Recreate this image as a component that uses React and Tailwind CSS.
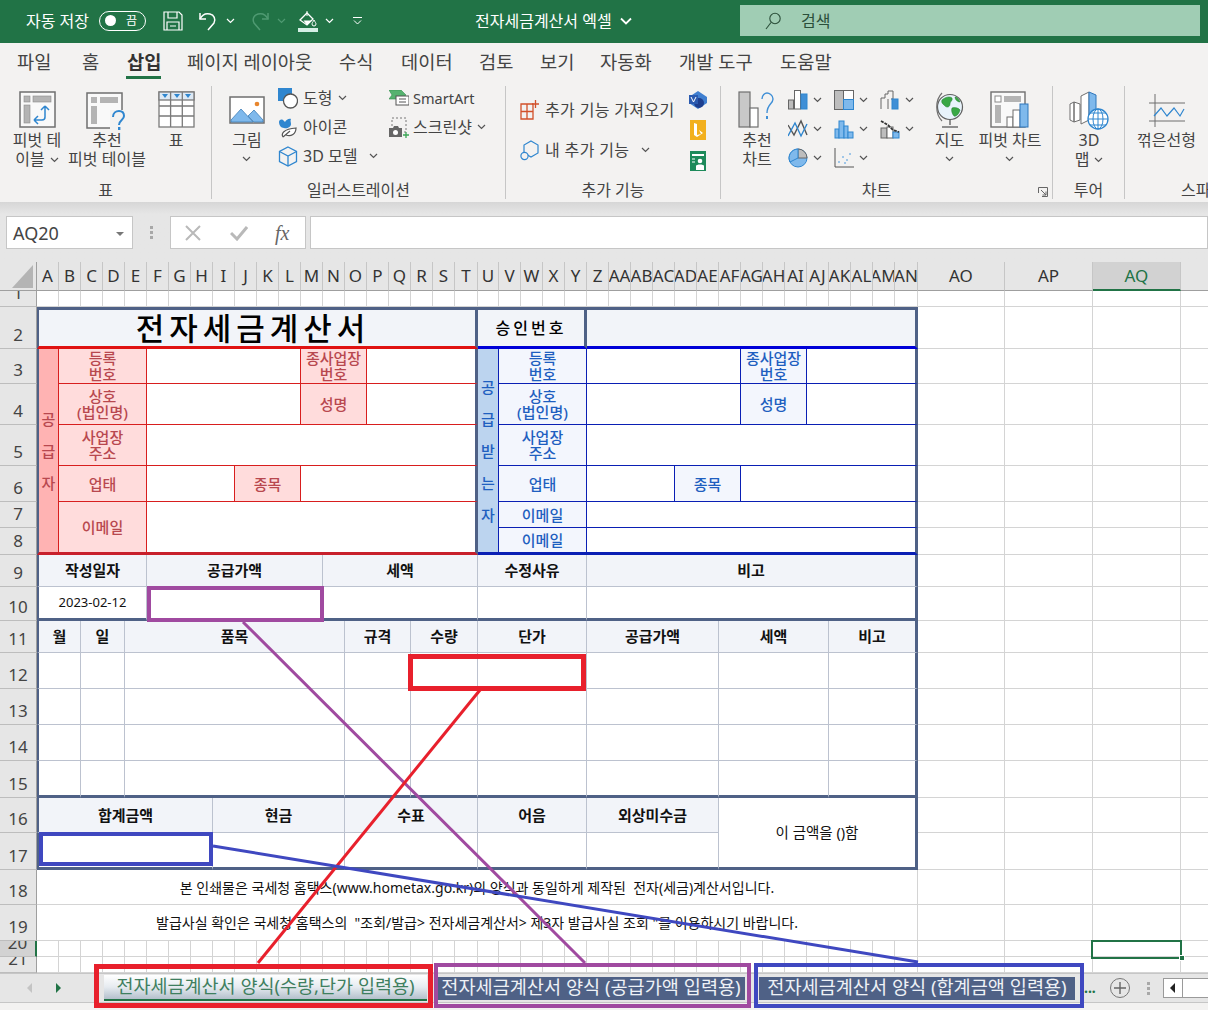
import { Fragment } from "react";

const COLS = "A B C D E F G H I J K L M N O P Q R S T U V W X Y Z AA AB AC AD AE AF AG AH AI AJ AK AL AM AN".split(" ");

const SPAN = {
  1: "col-span-1",
  2: "col-span-2",
  3: "col-span-3",
  4: "col-span-4",
  5: "col-span-5",
  6: "col-span-6",
  7: "col-span-7",
  8: "col-span-8",
  9: "col-span-9",
  10: "col-span-10",
  15: "col-span-15",
  20: "col-span-20",
  40: "col-span-40",
};

function Chevron({ className = "", color = "#555" }) {
  return (
    <svg width="9" height="6" viewBox="0 0 9 6" className={className}>
      <path d="M1 1l3.5 3.5L8 1" fill="none" stroke={color} strokeWidth="1.2" />
    </svg>
  );
}

/* title bar icons */
function SaveIcon() {
  return (
    <svg width="20" height="20" viewBox="0 0 20 20" fill="none" stroke="#fff" strokeWidth="1.2">
      <path d="M1 1h15l3 3v15H1z" />
      <path d="M5 1v6h9V1M4 19v-8h12v8M7 15h6" />
    </svg>
  );
}
function UndoIcon({ color = "#fff", flip = false }) {
  return (
    <svg width="21" height="21" viewBox="0 0 21 21" fill="none" stroke={color} strokeWidth="1.5" className={flip ? "-scale-x-100" : ""}>
      <path d="M2 3v6h6" />
      <path d="M2 9c2-4 6-6 10-5 4 1 6 5 4 9l-6 7" />
    </svg>
  );
}
function FillIcon() {
  return (
    <svg width="20" height="22" viewBox="0 0 20 22" fill="none">
      <path d="M2 10l7-7 6 6-6 6z" stroke="#fff" strokeWidth="1.3" />
      <path d="M5.5 10.5h8l-4.5 4.5z" fill="#fff" />
      <path d="M9 1v5M16 10c1 2 2 3 2 4a2 2 0 0 1-4 0c0-1 1-2 2-4z" stroke="#fff" strokeWidth="1" />
      <rect x="0" y="18" width="20" height="4" fill="#d5efe5" />
    </svg>
  );
}
function SearchGlass() {
  return (
    <svg width="16" height="18" viewBox="0 0 16 18" fill="none" stroke="#2b4f3a" strokeWidth="1.1">
      <circle cx="10" cy="6.5" r="5.2" />
      <path d="M6 10.5L1 17" />
    </svg>
  );
}

/* ribbon: large icons */
function PivotFrame({ children }) {
  return (
    <svg width="37" height="37" viewBox="0 0 37 37">
      <rect x="1" y="1" width="35" height="35" fill="#f9f9f9" stroke="#6f6f6f" strokeWidth="1.5" />
      <rect x="5" y="5" width="6" height="6" fill="#b4b4b4" stroke="#8a8a8a" strokeWidth=".6" />
      <rect x="14" y="5" width="18" height="6" fill="#b4b4b4" stroke="#8a8a8a" strokeWidth=".6" />
      <rect x="5" y="14" width="6" height="18" fill="#b4b4b4" stroke="#8a8a8a" strokeWidth=".6" />
      {children}
    </svg>
  );
}
function PivotTableIcon() {
  return (
    <PivotFrame>
      <path d="M26 15l-4 4M26 15l4 4M26 15v11a3 3 0 0 1-3 3H15M15 29l4-4M15 29l4 4" fill="none" stroke="#2f86cf" strokeWidth="1.5" />
    </PivotFrame>
  );
}
function RecPivotIcon() {
  return (
    <svg width="42" height="40" viewBox="0 0 42 40" className="translate-y-[2px]">
      <rect x="1" y="1" width="35" height="35" fill="#f9f9f9" stroke="#6f6f6f" strokeWidth="1.5" />
      <rect x="5" y="5" width="6" height="6" fill="#b4b4b4" />
      <rect x="14" y="5" width="18" height="6" fill="#b4b4b4" />
      <rect x="5" y="14" width="6" height="18" fill="#b4b4b4" />
      <rect x="24" y="18" width="18" height="22" fill="#f3f2f1" />
      <path d="M27 25c0-4 3-6 6-6s5 2 5 5c0 4-5 4-5 9" fill="none" stroke="#2f86cf" strokeWidth="2" />
      <rect x="32" y="35" width="2.4" height="3" fill="#2f86cf" />
    </svg>
  );
}
function TableIcon() {
  return (
    <svg width="37" height="37" viewBox="0 0 37 37" fill="none" stroke="#7a7a7a" strokeWidth="1.3">
      <rect x="1" y="1" width="35" height="35" fill="#fff" />
      <rect x="1" y="1" width="35" height="8" fill="#dce9f5" />
      <path d="M12.6 1v35M24.3 1v35M1 15h35M1 25h35" />
      <path d="M4 3h6l-3 4zM16 3h6l-3 4zM27 3h6l-3 4z" fill="#2f86cf" stroke="none" />
    </svg>
  );
}
function PictureIcon() {
  return (
    <svg width="36" height="28" viewBox="0 0 36 28">
      <rect x="1" y="1" width="34" height="26" fill="#fff" stroke="#6f6f6f" strokeWidth="1.5" />
      <path d="M2 24l10-11 12 13H2z" fill="#7fb9ec" stroke="#3f7fb8" strokeWidth=".8" />
      <path d="M19 20l6-6 9 10v2h-9z" fill="#7fb9ec" stroke="#3f7fb8" strokeWidth=".8" />
      <circle cx="28" cy="8" r="2.3" fill="#e8862d" />
    </svg>
  );
}
function RecChartIcon() {
  return (
    <svg width="38" height="38" viewBox="0 0 38 38" fill="none">
      <rect x="1" y="1" width="11" height="35" fill="#c8c8c8" stroke="#6f6f6f" strokeWidth="1.2" />
      <rect x="12" y="17" width="8" height="19" fill="#fff" stroke="#6f6f6f" strokeWidth="1.2" />
      <path d="M24 8c0-4 3-6 5-6s6 2 6 6c0 5-6 5-6 14" stroke="#3f8fd6" strokeWidth="1.4" />
      <rect x="28" y="25" width="2" height="3" fill="#3f8fd6" />
    </svg>
  );
}
function GlobeIcon() {
  return (
    <svg width="32" height="38" viewBox="0 0 32 38" fill="none">
      <circle cx="16" cy="16" r="12.5" fill="#e8f3fb" stroke="#5f5f5f" strokeWidth="1.2" />
      <path d="M8 9c3-3 8-4 10-2 1 3-2 3-2 6s-3 4-5 2-4-3-3-6zM18 17c3-1 7 0 8 2-1 4-4 7-6 6-2-2-3-6-2-8zM21 6c2 0 4 2 5 5-2 0-5-2-5-5z" fill="#39a845" stroke="#237a2c" strokeWidth=".5" />
      <path d="M8 2C1 9 1 23 8 30" stroke="#6f6f6f" strokeWidth="1.2" />
      <path d="M16 29v5M8 36h16" stroke="#6f6f6f" strokeWidth="1.5" />
    </svg>
  );
}
function PivotChartIcon() {
  return (
    <svg width="40" height="38" viewBox="0 0 40 38">
      <rect x="1" y="1" width="34" height="35" fill="#f9f9f9" stroke="#6f6f6f" strokeWidth="1.4" />
      <rect x="5" y="5" width="6" height="6" fill="#fff" stroke="#8a8a8a" />
      <rect x="14" y="5" width="17" height="6" fill="#b4b4b4" />
      <rect x="5" y="14" width="6" height="18" fill="#b4b4b4" />
      <rect x="17" y="26" width="6" height="10" fill="#fff" stroke="#6f6f6f" />
      <rect x="23" y="19" width="7" height="17" fill="#fff" stroke="#6f6f6f" />
      <rect x="30" y="13" width="8" height="23" fill="#7fb9ec" stroke="#2f76bb" />
    </svg>
  );
}
function Map3DIcon() {
  return (
    <svg width="40" height="40" viewBox="0 0 40 40" fill="none">
      <path d="M1 14l4-2v20l-4-2zM5 12l6 2v16l-6 2z" fill="#fff" stroke="#6f6f6f" />
      <path d="M12 6l8-4v28l-8 4z" fill="#fff" stroke="#6f6f6f" />
      <path d="M20 2l7 3v20h-7z" fill="#7fb9ec" stroke="#2f76bb" />
      <circle cx="29" cy="29" r="10" fill="#fff" stroke="#2f86cf" strokeWidth="1.3" />
      <path d="M19 29h20M29 19v20M21 23h16M21 35h16" stroke="#2f86cf" />
      <ellipse cx="29" cy="29" rx="5" ry="10" stroke="#2f86cf" />
    </svg>
  );
}
function SparkLineIcon() {
  return (
    <svg width="36" height="36" viewBox="0 0 36 36" fill="none">
      <path d="M0 11h36M0 29h36M6 2v33" stroke="#6f6f6f" strokeWidth="1" />
      <path d="M5 24l7-8 6 8 7-8 6 8 4-7" stroke="#2f86cf" strokeWidth="1.2" />
    </svg>
  );
}

/* ribbon: small icons */
function ShapesIcon() {
  return (
    <svg width="20" height="21" viewBox="0 0 20 21">
      <rect x="0" y="0" width="14" height="13" fill="#2f86cf" />
      <circle cx="12.5" cy="13" r="7" fill="#fff" stroke="#555" strokeWidth="1.3" />
    </svg>
  );
}
function IconsIcon() {
  return (
    <svg width="20" height="21" viewBox="0 0 20 21" fill="none">
      <path d="M1 5c0-2 2-3 4-2l2 2c1-2 4-4 6-3-1 2 0 3 0 5 0 3-4 5-7 4-3 0-5-3-5-6z" fill="#2f86cf" />
      <path d="M5 20c-2-3 0-8 13-9 0 6-5 9-10 7M5 20l7-6" stroke="#555" strokeWidth="1.2" fill="#fff" />
    </svg>
  );
}
function CubeIcon() {
  return (
    <svg width="20" height="21" viewBox="0 0 20 21" fill="none" stroke="#2f86cf" strokeWidth="1.3">
      <path d="M10 1l8.5 4.5v10L10 20l-8.5-4.5v-10z" />
      <path d="M1.5 5.5L10 10l8.5-4.5M10 10v10" />
    </svg>
  );
}
function SmartArtIcon() {
  return (
    <svg width="20" height="16" viewBox="0 0 20 16">
      <path d="M0 0h12l5 5-5 4H0l3-4z" fill="#56b26f" stroke="#2f8f4c" strokeWidth=".6" />
      <rect x="7" y="6" width="13" height="9" fill="#fff" stroke="#555" />
      <path d="M10 9h7M10 12h7" stroke="#555" />
    </svg>
  );
}
function ScreenshotIcon() {
  return (
    <svg width="20" height="21" viewBox="0 0 20 21" fill="none">
      <rect x="3" y="1" width="14" height="14" stroke="#777" strokeDasharray="2 2" />
      <path d="M0 11h4l1-2h4l1 2h3v9H0z" fill="#666" />
      <circle cx="6.5" cy="15.5" r="2.5" fill="#fff" />
      <path d="M17 15v6M14 18h6" stroke="#3aa655" strokeWidth="1.3" />
    </svg>
  );
}
function AddInsIcon() {
  return (
    <svg width="20" height="20" viewBox="0 0 20 20" fill="none" stroke="#d2502a" strokeWidth="1.3">
      <path d="M1 4h12v15H1zM1 11.5h12M7 4v15" />
      <path d="M15.5 0v8M12 4h7" />
    </svg>
  );
}
function MyAddInsIcon() {
  return (
    <svg width="20" height="21" viewBox="0 0 20 21" fill="none" stroke="#2f86cf" strokeWidth="1.2">
      <path d="M11 1l7 4v8l-7 4-7-4V5z" />
      <circle cx="4.5" cy="16" r="3.6" fill="#f3f2f1" />
    </svg>
  );
}
function VisioIcon() {
  return (
    <svg width="18" height="18" viewBox="0 0 18 18">
      <path d="M9 0l9 6v6l-9 6-9-6V6z" fill="#3f7fd0" />
      <circle cx="10" cy="12" r="5" fill="#1d3f8f" />
      <rect x="0" y="4" width="9" height="9" fill="#2b5bb0" />
      <path d="M2 6l2.5 5L7 6" fill="none" stroke="#fff" />
    </svg>
  );
}
function BingIcon() {
  return (
    <svg width="16" height="20" viewBox="0 0 16 20">
      <rect width="16" height="20" fill="#f2b01e" />
      <path d="M4 3v12l3 2 6-4-4-3 2 4-4 1V4z" fill="#fff" />
    </svg>
  );
}
function PeopleIcon() {
  return (
    <svg width="16" height="20" viewBox="0 0 16 20">
      <rect width="16" height="20" fill="#1d8a5a" />
      <rect x="2" y="3" width="12" height="2" fill="#fff" />
      <circle cx="10" cy="10" r="2.3" fill="#fff" />
      <path d="M6 19v-4c0-2 8-2 8 0v4z" fill="#fff" />
      <path d="M2 8h3M2 11h3" stroke="#fff" />
    </svg>
  );
}

/* chart gallery */
const b = "#2f86cf";
function BarMini() {
  return (
    <svg width="20" height="20" viewBox="0 0 20 20" fill="#fff" stroke="#666">
      <rect x=".5" y="10" width="5" height="9" fill="#bdbdbd" />
      <rect x="6.5" y=".5" width="6" height="18.5" />
      <rect x="13" y="4" width="6" height="15" fill="#3f8fd6" stroke={b} />
    </svg>
  );
}
function TreeMini() {
  return (
    <svg width="20" height="20" viewBox="0 0 20 20" stroke="#666">
      <rect x=".5" y=".5" width="9" height="19" fill="#bdbdbd" />
      <rect x="9.5" y=".5" width="10" height="9" fill="#fff" />
      <rect x="9.5" y="9.5" width="10" height="10" fill="#7fb9ec" stroke={b} />
    </svg>
  );
}
function WaterMini() {
  return (
    <svg width="20" height="20" viewBox="0 0 20 20" stroke="#666" fill="none">
      <path d="M1 19V8h4V4h3V1h5v8h-2" />
      <path d="M8 9v10" />
      <rect x="12" y="9" width="6" height="10" fill="#3f8fd6" stroke={b} />
    </svg>
  );
}
function LineMini() {
  return (
    <svg width="20" height="20" viewBox="0 0 20 20" fill="none">
      <path d="M0 6l6 10 7-14 6 14" stroke="#555" strokeWidth="1.4" />
      <path d="M0 17l7-13 6 13 6-12" stroke={b} strokeWidth="1.4" />
    </svg>
  );
}
function HistMini() {
  return (
    <svg width="20" height="20" viewBox="0 0 20 20" fill="#7fb9ec" stroke={b}>
      <rect x="1" y="10" width="4" height="9" />
      <rect x="5" y="2" width="5" height="17" />
      <rect x="10" y="7" width="4" height="12" />
      <rect x="14" y="13" width="5" height="6" />
    </svg>
  );
}
function ComboMini() {
  return (
    <svg width="20" height="20" viewBox="0 0 20 20" stroke="#666" fill="#fff">
      <rect x="1" y="9" width="6" height="10" fill="#bdbdbd" />
      <rect x="7" y="8" width="6" height="11" />
      <rect x="13" y="13" width="6" height="6" fill="#7fb9ec" stroke={b} />
      <path d="M1 2l7 4 5 5 6 2" fill="none" stroke="#333" strokeWidth="1.8" strokeDasharray="3 1" />
    </svg>
  );
}
function PieMini() {
  return (
    <svg width="20" height="20" viewBox="0 0 20 20" stroke="#444">
      <circle cx="10" cy="10" r="9" fill="#7fb9ec" stroke={b} />
      <path d="M10 10V1a9 9 0 0 1 9 9z" fill="#bdbdbd" stroke="#666" />
      <path d="M10 10L2 14a9 9 0 0 1 8-13z" fill="#7fb9ec" stroke={b} />
    </svg>
  );
}
function ScatterMini() {
  return (
    <svg width="20" height="20" viewBox="0 0 20 20">
      <path d="M1 0v19h19" fill="none" stroke="#555" />
      <g fill="#9fc6e8">
        <rect x="4" y="13" width="2" height="2" />
        <rect x="8" y="8" width="2" height="2" />
        <rect x="12" y="11" width="2" height="2" />
        <rect x="15" y="5" width="2" height="2" />
        <rect x="10" y="14" width="2" height="2" />
      </g>
    </svg>
  );
}

function Group({ width, label, children, labelClass = "", last = false, launcher = false }) {
  return (
    <div className={"relative mt-[2px] flex h-[113px] shrink-0 flex-col " + width + (last ? "" : " border-r border-[#c6c6c6]")}>
      <div className="flex h-[94px] shrink-0 items-start">{children}</div>
      <div className={"flex h-[20px] shrink-0 items-center justify-center whitespace-nowrap text-[16px] text-[#444] " + labelClass}>{label}</div>
      {launcher && (
        <svg width="10" height="10" viewBox="0 0 10 10" fill="none" stroke="#666" className="absolute bottom-[2px] right-[4px]">
          <path d="M.5 6V.5H9.5V9.5H4M3 3l5 5M8 4.5V8H4.5" />
        </svg>
      )}
    </div>
  );
}

function LargeButton({ width, icon, lines, chevron = false }) {
  return (
    <div className={"flex shrink-0 flex-col items-center pt-[5px] text-[16px] leading-[19px] text-[#444] " + width}>
      <div className="flex h-[37px] items-center justify-center">{icon}</div>
      <div className="mt-[3px] flex flex-col items-center whitespace-nowrap">
        {lines.map((t, i) => (
          <span key={i} className="inline-flex items-center">{t}</span>
        ))}
        {chevron && <Chevron className="mt-[6px]" />}
      </div>
    </div>
  );
}

function SmallRow({ icon, label, chevron, gap = "ml-[5px]" }) {
  return (
    <div className="flex h-[24px] items-center whitespace-nowrap text-[16px] text-[#444]">
      <span className="flex w-[20px] justify-center">{icon}</span>
      <span className={gap}>{label}</span>
      {chevron && <Chevron className={chevron} />}
    </div>
  );
}

function MiniChart({ icon }) {
  return (
    <div className="flex h-[29px] w-[46px] items-center gap-[5px]">
      {icon}
      <Chevron />
    </div>
  );
}

function TitleBar() {
  return (
    <div className="flex h-[43px] items-center bg-[#217346] pb-[2px] text-[16px] text-white">
      <span className="ml-[26px] w-[73px] whitespace-nowrap">자동 저장</span>
      <div className="flex h-[20px] w-[47px] items-center justify-between rounded-full border border-white pl-[5px] pr-[8px] text-[12px]">
        <span className="h-[11px] w-[11px] rounded-full bg-white" />
        <span>끔</span>
      </div>
      <span className="ml-[17px]"><SaveIcon /></span>
      <span className="ml-[15px]"><UndoIcon /></span>
      <Chevron className="ml-[7px]" color="#fff" />
      <span className="ml-[14px]"><UndoIcon color="#4f9a72" flip /></span>
      <Chevron className="ml-[7px]" color="#4f9a72" />
      <span className="ml-[12px]"><FillIcon /></span>
      <Chevron className="ml-[7px]" color="#fff" />
      <svg width="9" height="9" viewBox="0 0 9 9" fill="none" stroke="#fff" className="ml-[19px]">
        <path d="M0 1.5h9M1 4.5l3.5 3.5L8 4.5" />
      </svg>
      <span className="ml-[113px] w-[146px] whitespace-nowrap">전자세금계산서 엑셀</span>
      <svg width="12" height="8" viewBox="0 0 12 8" fill="none" stroke="#fff" strokeWidth="1.8" className="-translate-x-[1px]">
        <path d="M1 1.5l5 5 5-5" />
      </svg>
      <div className="ml-[107px] flex h-[31px] w-[460px] items-center bg-[#a0cdb4] pl-[25px] text-[#2b4f3a]">
        <SearchGlass />
        <span className="ml-[20px]">검색</span>
      </div>
    </div>
  );
}

const TABS = [
  ["파일", "w-[65px]"],
  ["홈", "w-[45px]"],
  ["삽입", "w-[60px]"],
  ["페이지 레이아웃", "w-[152px]"],
  ["수식", "w-[62px]"],
  ["데이터", "w-[78px]"],
  ["검토", "w-[61px]"],
  ["보기", "w-[60px]"],
  ["자동화", "w-[79px]"],
  ["개발 도구", "w-[101px]"],
  ["도움말", "w-[60px]"],
];

function TabRow() {
  return (
    <div className="flex h-[41px] items-center pb-[2px] pl-[17px] text-[18.7px] text-[#444]">
      {TABS.map(([t, w]) => (
        <div key={t} className={"relative whitespace-nowrap " + w}>
          <span className={t === "삽입" ? "font-bold text-[#333]" : ""}>{t}</span>
          {t === "삽입" && <span className="absolute left-[-1px] top-[28px] h-[3px] w-[35px] bg-[#217346]" />}
        </div>
      ))}
    </div>
  );
}

function Ribbon() {
  return (
    <div className="flex h-[118px] bg-[#f3f2f1]">
      <Group width="w-[212px]" label="표">
        <div className="ml-[8px] flex">
          <LargeButton
            width="w-[58px]"
            icon={<PivotTableIcon />}
            lines={["피벗 테", <>이블<Chevron className="ml-[5px]" /></>]}
          />
          <LargeButton width="w-[82px]" icon={<RecPivotIcon />} lines={["추천", "피벗 테이블"]} />
          <LargeButton width="w-[56px]" icon={<TableIcon />} lines={["표"]} />
        </div>
      </Group>
      <Group width="w-[294px]" label="일러스트레이션">
        <div className="ml-[4px] w-[62px]">
          <LargeButton width="w-[62px]" icon={<PictureIcon />} lines={["그림"]} chevron />
        </div>
        <div className="flex w-[111px] flex-col gap-[5px]">
          <SmallRow icon={<ShapesIcon />} label="도형" chevron="ml-[6px]" />
          <SmallRow icon={<IconsIcon />} label="아이콘" />
          <SmallRow icon={<CubeIcon />} label="3D 모델" chevron="ml-[12px]" />
        </div>
        <div className="flex flex-col gap-[5px]">
          <SmallRow icon={<SmartArtIcon />} label={<span className="text-[14.5px]">SmartArt</span>} gap="ml-[4px]" />
          <SmallRow icon={<ScreenshotIcon />} label="스크린샷" chevron="ml-[5px]" gap="ml-[4px]" />
        </div>
      </Group>
      <Group width="w-[215px]" label="추가 기능">
        <div className="ml-[14px] flex flex-col gap-[16px] pt-[12px] tracking-[.3px]">
          <SmallRow icon={<AddInsIcon />} label={<span className="tracking-[.35px]">추가 기능 가져오기</span>} gap="ml-[5px]" />
          <SmallRow icon={<MyAddInsIcon />} label={<span className="tracking-[.35px]">내 추가 기능</span>} chevron="ml-[12px]" gap="ml-[5px]" />
        </div>
        <div className="ml-auto mr-[13px] flex flex-col items-center gap-[11px] pt-[5px]">
          <VisioIcon />
          <BingIcon />
          <PeopleIcon />
        </div>
      </Group>
      <Group width="w-[332px]" label="차트" labelClass="pr-[20px]" launcher>
        <div className="ml-[6px] flex">
          <LargeButton width="w-[60px]" icon={<RecChartIcon />} lines={["추천", "차트"]} />
          <div className="ml-[1px] grid h-[87px] w-[138px] -translate-y-[1px] grid-cols-3">
            <MiniChart icon={<BarMini />} />
            <MiniChart icon={<TreeMini />} />
            <MiniChart icon={<WaterMini />} />
            <MiniChart icon={<LineMini />} />
            <MiniChart icon={<HistMini />} />
            <MiniChart icon={<ComboMini />} />
            <MiniChart icon={<PieMini />} />
            <MiniChart icon={<ScatterMini />} />
          </div>
          <LargeButton width="w-[47px]" icon={<GlobeIcon />} lines={["지도"]} chevron />
          <LargeButton width="w-[74px]" icon={<PivotChartIcon />} lines={["피벗 차트"]} chevron />
        </div>
      </Group>
      <Group width="w-[72px]" label="투어">
        <LargeButton width="w-[72px]" icon={<Map3DIcon />} lines={["3D", <>맵<Chevron className="ml-[5px]" /></>]} />
      </Group>
      <Group width="w-[83px]" label="" last>
        <LargeButton width="w-[83px]" icon={<SparkLineIcon />} lines={["꺾은선형"]} />
        <span className="absolute left-[56px] top-[92px] whitespace-nowrap text-[16px] text-[#444]">스파</span>
      </Group>
    </div>
  );
}

function FormulaBar() {
  return (
    <div className="flex h-[60px] items-start bg-gradient-to-b from-[#d6d6d6] via-[#e6e6e6] via-20% to-[#e6e6e6] pt-[14px]">
      <div className="ml-[6px] flex h-[33px] w-[127px] items-center justify-between border border-[#c6c6c6] bg-white pl-[6px] pr-[8px] pt-[2px] text-[18px] text-[#444]">
        <span>AQ20</span>
        <span className="h-0 w-0 border-x-[4px] border-t-[4px] border-x-transparent border-t-[#777]" />
      </div>
      <div className="ml-[15px] flex h-[33px] w-[6px] flex-col items-center justify-center gap-[2px]">
        <span className="h-[3px] w-[3px] bg-[#a8a8a8]" />
        <span className="h-[3px] w-[3px] bg-[#a8a8a8]" />
        <span className="h-[3px] w-[3px] bg-[#a8a8a8]" />
      </div>
      <div className="ml-[16px] flex h-[33px] w-[136px] items-center border border-[#c6c6c6] bg-white pl-[14px]">
        <svg width="16" height="16" viewBox="0 0 16 16" fill="none" stroke="#b9b9b9" strokeWidth="2">
          <path d="M1 1l14 14M15 1L1 15" />
        </svg>
        <svg width="18" height="16" viewBox="0 0 18 16" fill="none" stroke="#b9b9b9" strokeWidth="3" className="ml-[29px]">
          <path d="M1 8l6 6L17 2" />
        </svg>
        <span className="ml-[27px] font-['Liberation_Serif',serif] text-[20px] italic text-[#666]">fx</span>
      </div>
      <div className="ml-[4px] h-[33px] flex-1 border border-[#c6c6c6] bg-white" />
    </div>
  );
}

const cellBase = "flex items-center justify-center overflow-hidden text-center";
const gridLine = "border-r border-b border-[#d4d4d4]";
const redLabel = "bg-[#ffdcdc] border-r border-b border-[#d81e1e] text-[15px] leading-[16px] font-medium text-[#b8484f]";
const redInput = "bg-white border-r border-b border-[#d81e1e]";
const blueLabel = "bg-[#f3f6fd] border-r border-b border-[#0a1fb4] text-[15px] leading-[16px] font-medium text-[#1f5fc0]";
const blueInput = "bg-white border-r border-b border-[#0a1fb4]";
const headCell = "bg-[#f2f4f9] border-r border-b border-[#bcc2cf] text-[15px] font-bold text-[#111]";
const bodyCell = "bg-white border-r border-b border-[#bcc2cf]";
const rightEdge = "border-r-[3px] border-r-[#4f6186]";
const leftEdge = "border-l-2 border-l-[#4f6186]";
const midEdge = "border-r-[3px] border-r-[#4f6186]";
const thickBottom = "border-b-[3px] border-b-[#4f6186]";

function C({ n = 1, r = "", className = "", children }) {
  return <div className={cellBase + " " + SPAN[n] + " " + r + " " + className}>{children}</div>;
}

function RowHead({ n, selected = false }) {
  return (
    <div
      className={
        "flex items-end justify-center overflow-hidden border-b border-r border-b-[#bdbdbd] text-[17px] leading-[27px] text-[#444] " +
        (selected ? "border-r-2 border-r-[#217346] bg-[#d2d2d2]" : "border-r-[#9f9f9f] bg-[#e6e6e6]")
      }
    >
      {n}
    </div>
  );
}

function Tail() {
  return (
    <>
      <div className={gridLine} />
      <div className={gridLine} />
      <div className={gridLine} />
      <div className="border-b border-[#d4d4d4]" />
    </>
  );
}

function GridRow() {
  return (
    <>
      {COLS.map((c) => (
        <div key={c} className={gridLine} />
      ))}
      <Tail />
    </>
  );
}

function ColumnHeader() {
  return (
    <>
      <div className="relative border-b border-r border-[#9f9f9f] bg-[#e6e6e6]">
        <span className="absolute bottom-[2px] right-[3px] h-0 w-0 border-b-[23px] border-l-[21px] border-b-[#b4b4b4] border-l-transparent" />
      </div>
      {COLS.map((c) => (
        <div
          key={c}
          className="flex items-center justify-center overflow-hidden whitespace-nowrap border-b border-r border-b-[#9f9f9f] border-r-[#c6c6c6] bg-[#e6e6e6] text-[17px] text-[#333]"
        >
          {c}
        </div>
      ))}
      <div className="flex items-center justify-center border-b border-r border-b-[#9f9f9f] border-r-[#c6c6c6] bg-[#e6e6e6] text-[17px] text-[#333]">AO</div>
      <div className="flex items-center justify-center border-b border-r border-b-[#9f9f9f] border-r-[#c6c6c6] bg-[#e6e6e6] text-[17px] text-[#333]">AP</div>
      <div className="flex items-center justify-center border-b-2 border-r border-b-[#217346] border-r-[#c6c6c6] bg-[#d2d2d2] text-[17px] text-[#217346]">AQ</div>
      <div className="border-b border-[#9f9f9f] bg-[#e6e6e6]" />
    </>
  );
}

function VerticalLabel({ chars }) {
  return (
    <div className="flex flex-col text-[15px] font-medium leading-[32px]">
      {chars.map((c) => (
        <span key={c}>{c}</span>
      ))}
    </div>
  );
}

function Lines({ children }) {
  return <span className="block">{children}</span>;
}

function Sheet() {
  return (
    <div className="grid h-[711px] grid-cols-[37px_repeat(19,22px)_23px_21px_repeat(18,22px)_23px_87px_88px_88px_27px] grid-rows-[29px_16px_42px_35px_41px_41px_36px_26px_27px_32px_34px_32px_36px_36px_36px_37px_35px_37px_35px_36px_16px_16px] bg-white">
      <ColumnHeader />

      <RowHead n="1" />
      <GridRow />

      {/* 2 */}
      <RowHead n="2" />
      <C n={20} className={"border-t-[3px] border-t-[#4f6186] border-b-[3px] border-b-[#e01212] bg-[#f2f4f9] pr-[8px] text-[31px] font-medium tracking-[5px] text-black " + leftEdge + " " + midEdge}>전자세금계산서</C>
      <C n={5} className={"border-t-[3px] border-t-[#4f6186] border-b-[3px] border-b-[#0000d8] bg-[#f2f4f9] text-[16px] font-medium tracking-[3px] text-black " + midEdge}>승인번호</C>
      <C n={15} className={"border-t-[3px] border-t-[#4f6186] border-b-[3px] border-b-[#0000d8] bg-[#f2f4f9] " + rightEdge} />
      <Tail />

      {/* 3 */}
      <RowHead n="3" />
      <C r="row-span-6" className={"border-b-[3px] border-r border-b-[#c8202c] border-r-[#d81e1e] bg-[#ffb3b3] text-[#b8484f] " + leftEdge}>
        <VerticalLabel chars={["공", "급", "자"]} />
      </C>
      <C n={4} className={redLabel}><Lines>등록<br />번호</Lines></C>
      <C n={7} className={redInput} />
      <C n={3} className={redLabel}><Lines>종사업장<br />번호</Lines></C>
      <C n={5} className={redInput + " " + midEdge} />
      <C r="row-span-6" className="border-b-[3px] border-r border-b-[#0a1fb4] border-r-[#0a1fb4] bg-[#bcd4ef] text-[#1f5fc0]">
        <VerticalLabel chars={["공", "급", "받", "는", "자"]} />
      </C>
      <C n={4} className={blueLabel}><Lines>등록<br />번호</Lines></C>
      <C n={7} className={blueInput} />
      <C n={3} className={blueLabel}><Lines>종사업장<br />번호</Lines></C>
      <C n={5} className={blueInput + " " + rightEdge} />
      <Tail />

      {/* 4 */}
      <RowHead n="4" />
      <C n={4} className={redLabel}><Lines>상호<br />(법인명)</Lines></C>
      <C n={7} className={redInput} />
      <C n={3} className={redLabel}>성명</C>
      <C n={5} className={redInput + " " + midEdge} />
      <C n={4} className={blueLabel}><Lines>상호<br />(법인명)</Lines></C>
      <C n={7} className={blueInput} />
      <C n={3} className={blueLabel}>성명</C>
      <C n={5} className={blueInput + " " + rightEdge} />
      <Tail />

      {/* 5 */}
      <RowHead n="5" />
      <C n={4} className={redLabel}><Lines>사업장<br />주소</Lines></C>
      <C n={15} className={redInput + " " + midEdge} />
      <C n={4} className={blueLabel}><Lines>사업장<br />주소</Lines></C>
      <C n={15} className={blueInput + " " + rightEdge} />
      <Tail />

      {/* 6 */}
      <RowHead n="6" />
      <C n={4} className={redLabel}>업태</C>
      <C n={4} className={redInput} />
      <C n={3} className={redLabel}>종목</C>
      <C n={8} className={redInput + " " + midEdge} />
      <C n={4} className={blueLabel}>업태</C>
      <C n={4} className={blueInput} />
      <C n={3} className={blueLabel}>종목</C>
      <C n={8} className={blueInput + " " + rightEdge} />
      <Tail />

      {/* 7 */}
      <RowHead n="7" />
      <C n={4} r="row-span-2" className={redLabel + " border-b-[3px] border-b-[#c8202c]"}>이메일</C>
      <C n={15} r="row-span-2" className={redInput + " border-b-[3px] border-b-[#c8202c] " + midEdge} />
      <C n={4} className={blueLabel}>이메일</C>
      <C n={15} className={blueInput + " " + rightEdge} />
      <Tail />

      {/* 8 */}
      <RowHead n="8" />
      <C n={4} className={blueLabel + " border-b-[3px] border-b-[#0a1fb4]"}>이메일</C>
      <C n={15} className={blueInput + " border-b-[3px] border-b-[#0a1fb4] " + rightEdge} />
      <Tail />

      {/* 9 */}
      <RowHead n="9" />
      <C n={5} className={headCell + " " + leftEdge}>작성일자</C>
      <C n={8} className={headCell}>공급가액</C>
      <C n={7} className={headCell}>세액</C>
      <C n={5} className={headCell}>수정사유</C>
      <C n={15} className={headCell + " " + rightEdge}>비고</C>
      <Tail />

      {/* 10 */}
      <RowHead n="10" />
      <C n={5} className={bodyCell + " text-[13px] text-[#111] " + thickBottom + " " + leftEdge}>2023-02-12</C>
      <C n={8} className={bodyCell + " " + thickBottom} />
      <C n={7} className={bodyCell + " " + thickBottom} />
      <C n={5} className={bodyCell + " " + thickBottom} />
      <C n={15} className={bodyCell + " " + thickBottom + " " + rightEdge} />
      <Tail />

      {/* 11 */}
      <RowHead n="11" />
      <C n={2} className={headCell + " " + leftEdge}>월</C>
      <C n={2} className={headCell}>일</C>
      <C n={10} className={headCell}>품목</C>
      <C n={3} className={headCell}>규격</C>
      <C n={3} className={headCell}>수량</C>
      <C n={5} className={headCell}>단가</C>
      <C n={6} className={headCell}>공급가액</C>
      <C n={5} className={headCell}>세액</C>
      <C n={4} className={headCell + " " + rightEdge}>비고</C>
      <Tail />

      {/* 12 - 15 */}
      {["12", "13", "14", "15"].map((n) => {
        const edge = n === "15" ? " " + thickBottom : "";
        return (
          <Fragment key={n}>
            <RowHead n={n} />
            <C n={2} className={bodyCell + edge + " " + leftEdge} />
            <C n={2} className={bodyCell + edge} />
            <C n={10} className={bodyCell + edge} />
            <C n={3} className={bodyCell + edge} />
            <C n={3} className={bodyCell + edge} />
            <C n={5} className={bodyCell + edge} />
            <C n={6} className={bodyCell + edge} />
            <C n={5} className={bodyCell + edge} />
            <C n={4} className={bodyCell + edge + " " + rightEdge} />
            <Tail />
          </Fragment>
        );
      })}

      {/* 16 */}
      <RowHead n="16" />
      <C n={8} className={headCell + " " + leftEdge}>합계금액</C>
      <C n={6} className={headCell}>현금</C>
      <C n={6} className={headCell}>수표</C>
      <C n={5} className={headCell}>어음</C>
      <C n={6} className={headCell}>외상미수금</C>
      <C n={9} r="row-span-2" className={bodyCell + " text-[14.5px] text-[#111] " + thickBottom + " " + rightEdge}>이 금액을 ()함</C>
      <Tail />

      {/* 17 */}
      <RowHead n="17" />
      <C n={8} className={bodyCell + " " + thickBottom + " " + leftEdge} />
      <C n={6} className={bodyCell + " " + thickBottom} />
      <C n={6} className={bodyCell + " " + thickBottom} />
      <C n={5} className={bodyCell + " " + thickBottom} />
      <C n={6} className={bodyCell + " " + thickBottom} />
      <Tail />

      {/* 18, 19 */}
      <RowHead n="18" />
      <C n={40} className={gridLine + " whitespace-pre text-[14px] text-[#111]"}>본 인쇄물은 국세청 홈택스(www.hometax.go.kr)의 양식과 동일하게 제작된  전자(세금)계산서입니다.</C>
      <Tail />
      <RowHead n="19" />
      <C n={40} className={gridLine + " whitespace-pre text-[14px] text-[#111]"}>발급사실 확인은 국세청 홈택스의  "조회/발급&gt; 전자세금계산서&gt; 제3자 발급사실 조회 "를 이용하시기 바랍니다.</C>
      <Tail />

      <RowHead n="20" selected />
      <GridRow />
      <RowHead n="21" />
      <GridRow />
    </div>
  );
}

function SheetTabs() {
  return (
    <div className="flex h-[37px] flex-col bg-[#f3f2f1]">
      <div className="flex h-[30px] items-center border-y border-[#c6c6c6] bg-[#e6e6e6]">
        <span className="ml-[27px] h-0 w-0 border-y-[5px] border-r-[5px] border-y-transparent border-r-[#c4c4c4]" />
        <span className="ml-[24px] h-0 w-0 border-y-[5px] border-l-[5px] border-y-transparent border-l-[#217346]" />
        <div className="ml-[43px] flex h-[26px] w-[323px] items-center justify-center border-b-2 border-[#217346] bg-gradient-to-b from-white via-[#e6ebf0] to-[#b4c0cc] pb-[3px] text-[18.5px] text-[#3f7f60]">
          <span className="whitespace-nowrap">전자세금계산서 양식(수량,단가 입력용)</span>
        </div>
        <div className="ml-[10px] flex h-[23px] w-[308px] items-center justify-center bg-[#4f6186] pb-[3px] text-[18.6px] text-[#eef1f6]">
          <span className="whitespace-nowrap">전자세금계산서 양식 (공급가액 입력용)</span>
        </div>
        <div className="ml-[14px] flex h-[23px] w-[316px] items-center justify-center bg-[#4f6186] pb-[3px] text-[18.6px] text-[#eef1f6]">
          <span className="whitespace-nowrap">전자세금계산서 양식 (합계금액 입력용)</span>
        </div>
        <span className="ml-[9px] text-[14px] font-bold leading-none text-[#217346]">...</span>
        <div className="ml-[14px] flex h-[20px] w-[20px] items-center justify-center rounded-full border border-[#777]">
          <svg width="12" height="12" viewBox="0 0 12 12" stroke="#666" strokeWidth="1.4">
            <path d="M6 0v12M0 6h12" />
          </svg>
        </div>
        <div className="ml-[17px] flex flex-col gap-[2px]">
          <span className="h-[3px] w-[3px] bg-[#a8a8a8]" />
          <span className="h-[3px] w-[3px] bg-[#a8a8a8]" />
          <span className="h-[3px] w-[3px] bg-[#a8a8a8]" />
        </div>
        <div className="ml-[13px] flex h-[20px] w-[20px] items-center justify-center border border-[#9a9a9a] bg-white">
          <span className="h-0 w-0 border-y-[5px] border-r-[5px] border-y-transparent border-r-[#222]" />
        </div>
        <div className="h-[20px] flex-1 border-y border-[#9a9a9a] bg-white" />
      </div>
    </div>
  );
}

function Annotations() {
  return (
    <div className="pointer-events-none absolute inset-0 z-10">
      <svg width="1208" height="1010" viewBox="0 0 1208 1010" className="absolute left-0 top-0" fill="none">
        <path d="M243 622L585 963" stroke="#a04aa0" strokeWidth="3" />
        <path d="M480 690L258 963" stroke="#e8202c" strokeWidth="3" />
        <path d="M213 846L918 962" stroke="#3f48c0" strokeWidth="3" />
      </svg>
      {/* annotated boxes */}
      <div className="absolute left-[147px] top-[586px] h-[36px] w-[177px] border-[4px] border-[#a04aa0]" />
      <div className="absolute left-[408px] top-[654px] h-[37px] w-[178px] border-[5px] border-[#e8202c]" />
      <div className="absolute left-[39px] top-[832px] h-[34px] w-[174px] border-[4px] border-[#3f48c0]" />
      <div className="absolute left-[94px] top-[964px] h-[44px] w-[339px] border-[5px] border-[#e8202c]" />
      <div className="absolute left-[434px] top-[963px] h-[45px] w-[317px] border-[4px] border-[#a04aa0]" />
      <div className="absolute left-[754px] top-[963px] h-[45px] w-[330px] border-[4px] border-[#3f48c0]" />
      {/* active cell */}
      <div className="absolute left-[1091px] top-[940px] h-[19px] w-[91px] border-2 border-[#217346]" />
      <div className="absolute left-[1179px] top-[955px] h-[6px] w-[6px] border border-white bg-[#217346]" />
    </div>
  );
}

export default function App() {
  return (
    <div className="relative h-[1010px] w-[1208px] overflow-hidden bg-white font-['Noto_Sans','Noto_Sans_CJK_KR',sans-serif]">
      <TitleBar />
      <div className="bg-[#f3f2f1]">
        <TabRow />
        <Ribbon />
      </div>
      <FormulaBar />
      <Sheet />
      <SheetTabs />
      <Annotations />
    </div>
  );
}
